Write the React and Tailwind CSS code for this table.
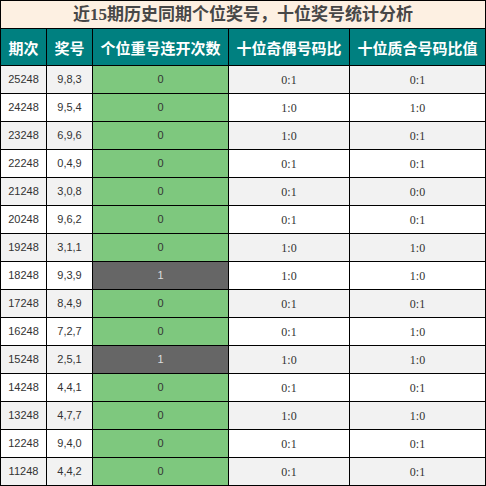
import React from "react";

const rows = [
  ["25248", "9,8,3", 0, "0:1", "0:1"],
  ["24248", "9,5,4", 0, "1:0", "1:0"],
  ["23248", "6,9,6", 0, "1:0", "0:1"],
  ["22248", "0,4,9", 0, "0:1", "0:1"],
  ["21248", "3,0,8", 0, "0:1", "0:0"],
  ["20248", "9,6,2", 0, "0:1", "0:1"],
  ["19248", "3,1,1", 0, "1:0", "1:0"],
  ["18248", "9,3,9", 1, "1:0", "1:0"],
  ["17248", "8,4,9", 0, "0:1", "0:1"],
  ["16248", "7,2,7", 0, "0:1", "1:0"],
  ["15248", "2,5,1", 1, "1:0", "1:0"],
  ["14248", "4,4,1", 0, "0:1", "0:1"],
  ["13248", "4,7,7", 0, "1:0", "1:0"],
  ["12248", "9,4,0", 0, "0:1", "0:1"],
  ["11248", "4,4,2", 0, "0:1", "0:1"],
];

const sans = { fontFamily: '"Liberation Sans", "Noto Sans CJK SC", sans-serif' };
const cjk = { fontFamily: '"Noto Sans CJK SC", "Liberation Sans", sans-serif' };
const title = { fontFamily: '"Liberation Serif", "Noto Sans CJK SC", serif' };
const serif = { fontFamily: '"Liberation Serif", serif' };

export default function App() {
  return (
    <div className="w-[486px] h-[486px] bg-white overflow-hidden">
      <table className="w-[485px] table-fixed border-collapse">
        <colgroup>
          <col className="w-[46px]" />
          <col className="w-[46px]" />
          <col className="w-[136px]" />
          <col className="w-[121px]" />
          <col className="w-[136px]" />
        </colgroup>
        <thead>
          <tr className="h-[28px]">
            <th
              colSpan={5}
              className="border border-black bg-[#fdf0e2] text-[#474747] text-[17px] font-bold leading-none p-0 text-center"
              style={title}
            >
              近15期历史同期个位奖号，十位奖号统计分析
            </th>
          </tr>
          <tr className="h-[37px]">
            {["期次", "奖号", "个位重号连开次数", "十位奇偶号码比", "十位质合号码比值"].map((h) => (
              <th
                key={h}
                className="border border-black bg-[#008080] text-white text-[15px] font-bold leading-none p-0 text-center"
                style={cjk}
              >
                {h}
              </th>
            ))}
          </tr>
        </thead>
        <tbody>
          {rows.map((r, i) => {
            const bg = i % 2 === 0 ? "bg-[#f2f2f2]" : "bg-white";
            return (
              <tr key={r[0]} className="h-[28px]">
                <td className={`border border-black ${bg} text-[#333333] text-[11px] text-center p-0`} style={sans}>
                  {r[0]}
                </td>
                <td className={`border border-black ${bg} text-[#333333] text-[11px] text-center p-0`} style={sans}>
                  {r[1]}
                </td>
                {r[2] === 1 ? (
                  <td className="border border-black bg-[#666666] text-[#dddddd] text-[11px] text-center p-0" style={sans}>
                    1
                  </td>
                ) : (
                  <td className="border border-black bg-[#7ec87e] text-[#333333] text-[11px] text-center p-0" style={sans}>
                    0
                  </td>
                )}
                <td className={`border border-black ${bg} text-[#333333] text-[12px] text-center p-0`} style={serif}>
                  {r[3]}
                </td>
                <td className={`border border-black ${bg} text-[#333333] text-[12px] text-center p-0`} style={serif}>
                  {r[4]}
                </td>
              </tr>
            );
          })}
        </tbody>
      </table>
    </div>
  );
}
